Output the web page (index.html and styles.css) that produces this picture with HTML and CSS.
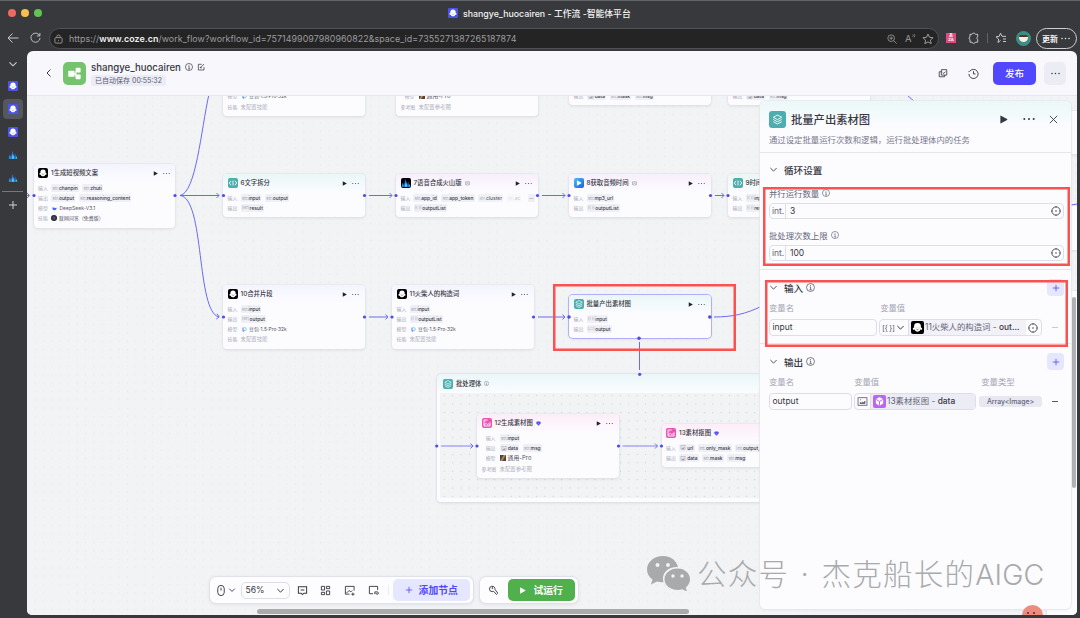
FILE: index.html
```html
<!DOCTYPE html>
<html lang="zh-CN">
<head>
    <meta charset="UTF-8">
    <meta name="viewport" content="width=device-width, initial-scale=1.0">
    <title>shangye_huocairen - 工作流 -智能体平台</title>
    <link rel="stylesheet" href="styles.css">
</head>
<body>
    <!-- Shared icons -->
    <svg class="icon-defs" aria-hidden="true">
        <symbol id="bot" viewBox="0 0 16 16"><path d="M8 2.500a4.200 4.200 0 0 1 4.200 4.300v1.200c1.400.3 1.900 1.300 1.500 2.100-.3.700-1.300.8-2 .5C11 12.300 9.700 13.200 8 13.200S5 12.300 4.300 10.600c-.7.3-1.700.2-2-.5-.4-.8.1-1.800 1.500-2.100V6.800A4.200 4.200 0 0 1 8 2.500z" fill="#fff"/><path d="M6.300 8.200v.8M9.700 8.200v.8M7 10.500q1 .7 2 0" stroke="currentColor" stroke-width=".7" fill="none"/></symbol>
        <symbol id="play" viewBox="0 0 10 10"><path d="M1.500 1.200v7.600q0 .8.8.4L9 5.500q.6-.5 0-1L2.300.8q-.8-.4-.8.4z" fill="currentColor"/></symbol>
        <symbol id="dots" viewBox="0 0 12 4"><g fill="currentColor"><circle cx="1.300" cy="2" r="1"/><circle cx="6" cy="2" r="1"/><circle cx="10.700" cy="2" r="1"/></g></symbol>
        <symbol id="info" viewBox="0 0 12 12"><g fill="none" stroke="currentColor"><circle cx="6" cy="6" r="5.300"/><path d="M5 5.200h1.200V9M4.600 9h3M6 2.800v1.200"/></g></symbol>
        <symbol id="down" viewBox="0 0 10 10"><path d="M1.500 3.300L5 6.800l3.500-3.500" fill="none" stroke="currentColor" stroke-width="1.100"/></symbol>
        <symbol id="layers" viewBox="0 0 16 16"><g fill="none" stroke="#fff" stroke-width="1.100" stroke-linejoin="round"><path d="M8 2.500l5.200 2.800L8 8.100 2.800 5.300zM2.800 8L8 10.800 13.200 8M2.800 10.700L8 13.500l5.200-2.800"/></g></symbol>
        <symbol id="code" viewBox="0 0 16 16"><path d="M5 4.500L2 8l3 3.500M11 4.500L14 8l-3 3.500M8 4v8" fill="none" stroke="#fff" stroke-width="1.400"/></symbol>
        <symbol id="peaks" viewBox="0 0 16 16"><path d="M1 14l2-7 2 7z" fill="#26a4ee"/><path d="M4 14L7.500 1 10 14z" fill="#2b6ff0"/><path d="M6 14l2-8 2 8z" fill="#42e4ee"/><path d="M9 14l2.500-9L13 14z" fill="#2d75ee"/><path d="M12 14l1.500-5 1.500 5z" fill="#31c8ee"/></symbol>
        <symbol id="picture" viewBox="0 0 16 16"><g fill="none" stroke="currentColor" stroke-width="1.200"><rect x="1.500" y="2.500" width="13" height="11"/><path d="M4.500 11V9.500l1.800.8L8 9l1.800.8 1.700-2.300V11z" fill="currentColor"/><path d="M4.500 5.500H6"/></g></symbol>
        <symbol id="photo" viewBox="0 0 16 16"><g fill="none" stroke="#fff" stroke-width="1.400"><path d="M12.800 7v5.800H3.200V3.200H9M3.500 11.500l3-3 2 2 1.500-1.200 2.500 2.200M5.500 6h.6"/></g></symbol>
        <symbol id="target" viewBox="0 0 12 12"><circle cx="6" cy="6" r="5" fill="none" stroke="currentColor"/><circle cx="6" cy="6" r=".9" fill="currentColor"/><path d="M6 .5v1.500M6 10v1.500M.5 6H2M10 6h1.500" stroke="currentColor"/></symbol>
        <symbol id="plus" viewBox="0 0 10 10"><path d="M5 1v8M1 5h8" stroke="currentColor" fill="none"/></symbol>
        <symbol id="doubao" viewBox="0 0 10 10"><path d="M2 1v7.500l3-1.200" fill="none" stroke="#5664f2" stroke-width="1.800"/><path d="M4 1.500c6-1 6 6 1 6" fill="none" stroke="#32c8d2" stroke-width="1.500"/></symbol>
        <symbol id="whale" viewBox="0 0 12 10"><path d="M.5 2c2 2 4 0 6 1.500L8 3c0 1 1 1.200 3.500-.5C11.500 5 10 9 5.500 9 2 9 .5 5.500.5 2z" fill="#4c66f4"/></symbol>
        <symbol id="gem" viewBox="0 0 10 10"><path d="M2 1h6l2 3-5 5.500L0 4z" fill="#5048f2"/><path d="M3.500 4L5 5.300 6.500 4" stroke="#fff" stroke-width=".8" fill="none"/></symbol>
        <symbol id="chat" viewBox="0 0 12 12"><path d="M1.500 2h9v7h-3L6 10.500 4.500 9h-3zM4 5.500h4" fill="none" stroke="currentColor" stroke-width="1.100"/></symbol>
    </svg>

    <div class="title-bar">
        <div class="lights"><i class="red"></i><i class="yellow"></i><i class="green"></i></div>
        <svg class="favicon"><use href="#bot"/></svg>
        <span class="tab-title">shangye_huocairen - 工作流 -智能体平台</span>
    </div>

    <div class="address-row">
        <svg class="back" viewBox="0 0 12 12"><path d="M11.500 6H1M5.500 1.500L1 6l4.500 4.500"/></svg>
        <svg class="reload" viewBox="0 0 12 12"><path d="M10.500 4A5 5 0 1 0 11 6.500M10.800 1v3.300H7.500"/></svg>
        <div class="address">
            <svg class="lock" viewBox="0 0 10 10"><rect x="1" y="3.500" width="8" height="6" rx="1"/><path d="M3.200 3.500V2.300a1.800 1.800 0 0 1 3.600 0v1.200M5 6v1"/></svg>
            <span class="url">https://<b>www.coze.cn</b>/work_flow?workflow_id=7571499097980960822&amp;space_id=7355271387265187874</span>
            <svg class="zoom-icon" viewBox="0 0 12 12"><circle cx="5" cy="5" r="4"/><path d="M8 8l3.500 3.500M3 5h4M5 3v4"/></svg>
            <span class="read">A<svg viewBox="0 0 6 8"><path d="M1 2q1.500 1.500 0 3M3 .8q2.500 2.700 0 5.400"/></svg></span>
            <svg class="star" viewBox="0 0 12 12"><path d="M6 1l1.500 3.300 3.600.4-2.700 2.400.8 3.600L6 8.900l-3.200 1.800.8-3.600L.9 4.700l3.600-.4z"/></svg>
        </div>
        <span class="translate">あ<br>ZA</span>
        <svg class="puzzle" viewBox="0 0 12 12"><path d="M4 2.300a1.800 1.800 0 0 1 3.400 0h2.300v2.600a1.300 1.300 0 0 0 0 2.500v2.800H7.400a1.800 1.800 0 0 1-3.400 0H2V7.400a1.300 1.300 0 0 1 0-2.500V2.300z"/></svg>
        <i class="bar-line"></i>
        <svg class="star-list" viewBox="0 0 12 12"><path d="M5.500 8.500L3 10.500l.6-3.500L1 4.800l3.200-.5L5.500 1.200 7 4.300h4M8 7h3M8 9.500h3"/></svg>
        <div class="avatar"><i></i></div>
        <div class="update">更新 <svg><use href="#dots"/></svg></div>
    </div>

    <div class="main">
        <div class="side-tabs">
            <svg class="side-down"><use href="#down"/></svg>
            <div class="side-tab"><svg class="favicon"><use href="#bot"/></svg></div>
            <div class="side-tab active"><svg class="favicon"><use href="#bot"/></svg></div>
            <div class="side-tab"><svg class="favicon"><use href="#bot"/></svg></div>
            <div class="side-tab"><svg class="side-peaks"><use href="#peaks"/></svg></div>
            <div class="side-tab"><svg class="side-peaks"><use href="#peaks"/></svg></div>
            <i class="side-line"></i>
            <svg class="side-plus"><use href="#plus"/></svg>
        </div>

        <div class="app">
            <div class="app-header">
                <svg class="go-back" viewBox="0 0 8 10"><path d="M5.500 1.500L2 5l3.500 3.500"/></svg>
                <div class="flow-logo">
                    <svg viewBox="0 0 24 24"><g fill="#fff"><rect x="5.500" y="9" width="6.500" height="6.500" rx="1"/><rect x="13.200" y="6" width="5.200" height="5" rx="1"/><rect x="13.200" y="13" width="5.200" height="5" rx="1"/><path d="M11 11.300h2V9h1v7h-1v-2.800h-2z"/></g></svg>
                </div>
                <div class="flow-info">
                    <div class="flow-name">shangye_huocairen
                        <svg><use href="#info"/></svg>
                        <svg viewBox="0 0 12 12"><path d="M7 2H2v8.500h8.500V6M5 7.500L10.500 1.500M5 5.500v2h2" fill="none" stroke="currentColor" stroke-width="1.100"/></svg>
                    </div>
                    <div class="saved">已自动保存 00:55:32</div>
                </div>
                <svg class="copy" viewBox="0 0 12 12"><path d="M4 2h6.500v6.500H4zM4 4.500H1.500v6H8v-2M5.500 5.200L7 6.600 9 4.300"/></svg>
                <svg class="history" viewBox="0 0 12 12"><path d="M2 3.500A5 5 0 1 1 1 6.500M.5 4.500L2 3M6 3.500v3h2.200"/></svg>
                <button class="publish">发布</button>
                <button class="more"><svg><use href="#dots"/></svg></button>
            </div>

            <div class="canvas">
                <div class="node llm n-top1">
                    <div class="node-head"></div>
                    <div class="row"></div><div class="row"></div>
                    <div class="row"><label>模型</label><svg class="mini"><use href="#doubao"/></svg><span class="val">豆包·1.5·Pro·32k</span></div>
                    <div class="row"><label>技能</label><span class="none">未配置技能</span></div>
                </div>
                <div class="node wide n-top2">
                    <div class="node-head"></div>
                    <div class="row"></div><div class="row"></div>
                    <div class="row"><label>模型</label><i class="thumb"></i><span class="val big">通用-Pro</span></div>
                    <div class="row"><label>参考图</label><span class="none">未配置参考图</span></div>
                </div>
                <div class="node n-top3">
                    <div class="node-head"></div>
                    <div class="row"></div>
                    <div class="row"><label>输出</label><span class="tag"><svg><use href="#picture"/></svg>data</span><span class="tag"><i>str.</i>mask</span><span class="tag"><i>str.</i>msg</span></div>
                </div>
                <div class="node n-top4">
                    <div class="node-head"></div>
                    <div class="row"></div>
                    <div class="row"><label>输出</label><span class="tag"><svg><use href="#picture"/></svg>data</span><span class="tag"><i>str.</i>msg</span></div>
                </div>

                <div class="node llm n1">
                    <div class="node-head"><svg class="node-icon black"><use href="#bot"/></svg><b>1生成短视频文案</b><svg class="run"><use href="#play"/></svg><svg class="menu"><use href="#dots"/></svg></div>
                    <div class="row"><label>输入</label><span class="tag"><i>str.</i>chanpin</span><span class="tag"><i>str.</i>zhuti</span></div>
                    <div class="row"><label>输出</label><span class="tag"><i>str.</i>output</span><span class="tag"><i>str.</i>reasoning_content</span></div>
                    <div class="row"><label>模型</label><svg class="mini"><use href="#whale"/></svg><span class="val">DeepSeek-V3.1</span></div>
                    <div class="row"><label>技能</label><i class="skill"></i><span class="val">联网问答（免费版）</span></div>
                </div>
                <div class="node teal n6">
                    <div class="node-head"><svg class="node-icon green"><use href="#code"/></svg><b>6文字拆分</b><svg class="run"><use href="#play"/></svg><svg class="menu"><use href="#dots"/></svg></div>
                    <div class="row"><label>输入</label><span class="tag"><i>str.</i>input</span><span class="tag"><i>str.</i>output</span></div>
                    <div class="row"><label>输出</label><span class="tag"><i class="arr">[str]</i>result</span></div>
                </div>
                <div class="node plugin n7">
                    <div class="node-head"><svg class="node-icon black"><use href="#peaks"/></svg><b>7语音合成火山版</b><svg class="mark"><use href="#chat"/></svg><svg class="run"><use href="#play"/></svg><svg class="menu"><use href="#dots"/></svg></div>
                    <div class="row"><label>输入</label><span class="tag"><i>str.</i>app_id</span><span class="tag"><i>str.</i>app_token</span><span class="tag half"><i>str.</i>cluster</span><span class="tag faded"><i>str.</i>ac</span><span class="tag rest">···</span></div>
                    <div class="row"><label>输出</label><span class="tag"><i class="arr">[{ }]</i>outputList</span></div>
                </div>
                <div class="node plugin n8">
                    <div class="node-head"><svg class="node-icon blue"><use href="#play"/></svg><b>8获取音频时间</b><svg class="mark"><use href="#chat"/></svg><svg class="run"><use href="#play"/></svg><svg class="menu"><use href="#dots"/></svg></div>
                    <div class="row"><label>输入</label><span class="tag"><i>str.</i>mp3_url</span></div>
                    <div class="row"><label>输出</label><span class="tag"><i class="arr">[{ }]</i>outputList</span></div>
                </div>
                <div class="node teal n9">
                    <div class="node-head"><svg class="node-icon green"><use href="#code"/></svg><b>9时间线</b></div>
                    <div class="row"><label>输入</label><span class="tag"><i class="arr">[{ }]</i>input</span></div>
                    <div class="row"><label>输出</label><span class="tag"><i class="arr">[{ }]</i>result</span></div>
                </div>
                <div class="node llm n10">
                    <div class="node-head"><svg class="node-icon black"><use href="#bot"/></svg><b>10合并片段</b><svg class="run"><use href="#play"/></svg><svg class="menu"><use href="#dots"/></svg></div>
                    <div class="row"><label>输入</label><span class="tag"><i>str.</i>input</span></div>
                    <div class="row"><label>输出</label><span class="tag"><i class="arr">[str]</i>output</span></div>
                    <div class="row"><label>模型</label><svg class="mini"><use href="#doubao"/></svg><span class="val">豆包·1.5·Pro·32k</span></div>
                    <div class="row"><label>技能</label><span class="none">未配置技能</span></div>
                </div>
                <div class="node llm n11">
                    <div class="node-head"><svg class="node-icon black"><use href="#bot"/></svg><b>11火柴人的构造词</b><svg class="run"><use href="#play"/></svg><svg class="menu"><use href="#dots"/></svg></div>
                    <div class="row"><label>输入</label><span class="tag"><i>str.</i>input</span></div>
                    <div class="row"><label>输出</label><span class="tag"><i class="arr">[{ }]</i>outputList</span></div>
                    <div class="row"><label>模型</label><svg class="mini"><use href="#doubao"/></svg><span class="val">豆包·1.5·Pro·32k</span></div>
                    <div class="row"><label>技能</label><span class="none">未配置技能</span></div>
                </div>
                <div class="node teal selected n-batch">
                    <div class="node-head"><svg class="node-icon green"><use href="#layers"/></svg><b>批量产出素材图</b><svg class="run"><use href="#play"/></svg><svg class="menu"><use href="#dots"/></svg></div>
                    <div class="row"><label>输入</label><span class="tag"><i class="arr">[{ }]</i>input</span></div>
                    <div class="row"><label>输出</label><span class="tag"><i class="arr">[▱]</i>output</span></div>
                </div>

                <div class="batch-body">
                    <div class="batch-head"><svg class="node-icon green"><use href="#layers"/></svg><b>批处理体</b><svg class="mark"><use href="#info"/></svg></div>
                    <div class="batch-area"></div>
                </div>
                <div class="node pink wide n12">
                    <div class="node-head"><svg class="node-icon magenta"><use href="#photo"/></svg><b>12生成素材图</b><svg class="mark"><use href="#gem"/></svg><svg class="run"><use href="#play"/></svg><svg class="menu"><use href="#dots"/></svg></div>
                    <div class="row"><label>输入</label><span class="tag"><i>str.</i>input</span></div>
                    <div class="row"><label>输出</label><span class="tag"><svg><use href="#picture"/></svg>data</span><span class="tag"><i>str.</i>msg</span></div>
                    <div class="row"><label>模型</label><i class="thumb"></i><span class="val big">通用-Pro</span></div>
                    <div class="row"><label>参考图</label><span class="none">未配置参考图</span></div>
                </div>
                <div class="node pink n13">
                    <div class="node-head"><svg class="node-icon magenta"><use href="#photo"/></svg><b>13素材抠图</b><svg class="mark"><use href="#gem"/></svg></div>
                    <div class="row"><label>输入</label><span class="tag"><svg><use href="#picture"/></svg>url</span><span class="tag"><i>int.</i>only_mask</span><span class="tag"><i>int.</i>output_mode</span></div>
                    <div class="row"><label>输出</label><span class="tag"><svg><use href="#picture"/></svg>data</span><span class="tag"><i>str.</i>mask</span><span class="tag"><i>str.</i>msg</span></div>
                </div>
                <div class="node teal n-far1"></div>
                <div class="node llm n-far2"></div>
                <div class="node teal n-far3"></div>

                <!-- Connections between nodes -->
                <svg class="edges" viewBox="27 96 1050 519">
                    <g class="lines">
                        <path d="M27 195.500h2M180 195.500h39M369 195.500h23M542 195.500h23M715 195.500h9"/>
                        <path d="M180 195.500C196 193 201 130 209 94M180 195.500C205 198 196 312 219 317"/>
                        <path d="M369 317h19M538 317h27M714 317C732 317 746 314 762 306"/>
                        <path d="M639.500 342v28M907 95l8 7M1071 205l6-1"/>
                        <path class="soft" d="M441 446h32M622.500 446h35"/>
                        <path d="M27 193l2.500 2.500L27 198M216.500 193l2.500 2.500-2.500 2.500M389.500 193l2.500 2.500-2.500 2.500M562.500 193l2.500 2.500-2.500 2.500M721.500 193l2.500 2.500-2.500 2.500M217 313.800l2.200 3.200-3 2M385.500 314.500l2.500 2.500-2.500 2.500M562.500 314.500l2.500 2.500-2.500 2.500M470.500 443.500l2.500 2.500-2.500 2.500M655 443.500l2.500 2.500-2.500 2.500"/>
                    </g>
                    <g class="ports">
                        <circle cx="34" cy="195.500" r="1.600"/><circle cx="175" cy="195.500" r="1.600"/><circle cx="223.500" cy="195.500" r="1.600"/><circle cx="364.500" cy="195.500" r="1.600"/><circle cx="396" cy="195.500" r="1.600"/><circle cx="537.500" cy="195.500" r="1.600"/><circle cx="569" cy="195.500" r="1.600"/><circle cx="710.500" cy="195.500" r="1.600"/><circle cx="728" cy="195.500" r="1.600"/>
                        <circle cx="223.500" cy="317" r="1.600"/><circle cx="364.500" cy="317" r="1.600"/><circle cx="392" cy="317" r="1.600"/><circle cx="533.500" cy="317" r="1.600"/><circle cx="569" cy="317" r="1.800"/><circle cx="709.800" cy="317" r="1.800"/><circle cx="639" cy="338.300" r="1.800"/><circle cx="639.700" cy="374.300" r="1.600"/>
                        <circle cx="436.700" cy="446" r="1.600"/><circle cx="477" cy="446" r="1.600"/><circle cx="618.500" cy="446" r="1.600"/><circle cx="661.500" cy="446" r="1.600"/>
                    </g>
                </svg>

                <div class="tools">
                    <div class="tool-group">
                        <svg class="mouse" viewBox="0 0 12 14"><path d="M2.500 5a3.500 3.500 0 0 1 7 0v4a3.500 3.500 0 0 1-7 0zM6 4v3"/></svg>
                        <svg class="caret"><use href="#down"/></svg>
                        <div class="percent">56%<svg><use href="#down"/></svg></div>
                        <svg class="tool"><use href="#chat"/></svg>
                        <svg class="tool" viewBox="0 0 12 12"><path d="M1.500 1.500H5v4H1.500zM7 1.500h3.500V4H7zM1.500 8H5v2.500H1.500zM7 6.500h3.500v4H7z"/></svg>
                        <svg class="tool" viewBox="0 0 12 12"><path d="M11 6V1.500H1.500V10H6M2.500 9l3-3 2 1.500L9 6M4 4h.5M8 10h3.500M9.700 8.300v3.400"/></svg>
                        <svg class="tool" viewBox="0 0 12 12"><path d="M10.500 5.500v-4h-9v8H5.500M7.500 10V7.500H10a1.300 1.300 0 1 1-1.300 1.300"/></svg>
                        <i class="tool-line"></i>
                        <button class="add-node"><svg><use href="#plus"/></svg>添加节点</button>
                    </div>
                    <div class="tool-group">
                        <svg class="wrench" viewBox="0 0 12 12"><path d="M4.500 7.300a3 3 0 1 1 3-3.800L7.700 5l3 3.800-1.600 1.500-3-3.500zM4.700 2v2.500"/></svg>
                        <button class="test-run"><svg><use href="#play"/></svg>试运行</button>
                    </div>
                </div>
                <i class="scroll-x"></i>
                <i class="scroll-y"></i>

                <div class="panel">
                    <div class="panel-head">
                        <div class="panel-title">
                            <svg class="panel-icon"><use href="#layers"/></svg>
                            <h2>批量产出素材图</h2>
                            <svg class="p-run"><use href="#play"/></svg>
                            <svg class="p-dots"><use href="#dots"/></svg>
                            <svg class="p-close" viewBox="0 0 10 10"><path d="M1 1l8 8M9 1L1 9"/></svg>
                        </div>
                        <p>通过设定批量运行次数和逻辑，运行批处理体内的任务</p>
                    </div>
                    <div class="section loop">
                        <div class="section-title"><svg><use href="#down"/></svg><h3>循环设置</h3></div>
                        <div class="field-label">并行运行数量<svg><use href="#info"/></svg></div>
                        <div class="number"><span>int.</span><em>3</em><svg><use href="#target"/></svg></div>
                        <div class="field-label second">批处理次数上限<svg><use href="#info"/></svg></div>
                        <div class="number"><span>int.</span><em>100</em><svg><use href="#target"/></svg></div>
                    </div>
                    <div class="section inputs">
                        <div class="section-title"><svg><use href="#down"/></svg><h3>输入</h3><svg class="tip"><use href="#info"/></svg><button class="plus"><svg><use href="#plus"/></svg></button></div>
                        <div class="cols"><span>变量名</span><span>变量值</span></div>
                        <div class="line">
                            <div class="box">input</div>
                            <div class="ref">
                                <span class="kind">[{ }]</span><svg class="ref-down"><use href="#down"/></svg>
                                <div class="pill"><svg class="pill-icon black"><use href="#bot"/></svg>11火柴人的构造词 - <b>out...</b></div>
                                <svg class="ref-target"><use href="#target"/></svg>
                            </div>
                            <i class="minus off"></i>
                        </div>
                    </div>
                    <div class="section outputs">
                        <div class="section-title"><svg><use href="#down"/></svg><h3>输出</h3><svg class="tip"><use href="#info"/></svg><button class="plus"><svg><use href="#plus"/></svg></button></div>
                        <div class="cols"><span>变量名</span><span>变量值</span><span>变量类型</span></div>
                        <div class="line">
                            <div class="box">output</div>
                            <div class="ref">
                                <svg class="kind-pic"><use href="#picture"/></svg>
                                <div class="pill"><svg class="pill-icon purple" viewBox="0 0 16 16"><path d="M8 2.500l4.500 2.700v5.400L8 13.300l-4.500-2.700V5.200z" fill="#fff"/><path d="M4 5.500L8 8l4-2.500M8 8v5" fill="none" stroke="#bb65f5" stroke-width="1.200"/></svg>13素材抠图 - <b>data</b></div>
                            </div>
                            <span class="type">Array&lt;Image&gt;</span>
                            <i class="minus"></i>
                        </div>
                    </div>
                </div>

                <i class="frame frame-node"></i>
                <i class="frame frame-loop"></i>
                <i class="frame frame-input"></i>

                <div class="watermark">
                    <svg viewBox="0 0 44 36"><path d="M17 1C8 1 1 7 1 14.500c0 4 2 7.500 5.500 10L5 29.500l6-3c2 .6 4 .9 6.500.8C15 19 21 11.500 32 12 30.500 5.500 24.500 1 17 1z"/><path d="M31.500 13.500c-7.500 0-13 5-13 10.800s5.500 10.700 13 10.700c1.700 0 3.300-.3 4.800-.8l4.700 2.300-1.200-4C42 30.600 44 28 44 24.300c0-5.800-5-10.800-12.500-10.800z"/><g class="eyes"><circle cx="11.500" cy="10" r="2"/><circle cx="22" cy="10" r="2"/><circle cx="27" cy="21" r="1.700"/><circle cx="36" cy="21" r="1.700"/></g></svg>
                    <span>公众号 · 杰克船长的<b>AIGC</b></span>
                </div>
                <div class="mascot"><i></i><i></i></div>
            </div>
        </div>
    </div>
</body>
</html>
```

FILE: styles.css
```css
* {
    box-sizing: border-box;
}

body {
    font-family: Inter, "Noto Sans CJK SC", sans-serif;
    margin: 0;
    width: 1080px;
    height: 618px;
    overflow: hidden;
    background-color: #38393c;
    border-top: 1px solid #626467;
    color: #383743;
}

svg {
    display: block;
    flex: none;
}

i, em {
    font-style: normal;
}

h2, h3, p {
    margin: 0;
}

button {
    font-family: inherit;
    border: none;
    padding: 0;
    display: flex;
    align-items: center;
    justify-content: center;
}

.icon-defs {
    position: absolute;
    width: 0;
    height: 0;
}

/* Browser window */
.title-bar {
    height: 27px;
    display: flex;
    align-items: center;
    padding: 0 0 3px 8px;
}

.lights {
    display: flex;
    gap: 4.8px;
    width: 440px;
}

.lights i {
    width: 8px;
    height: 8px;
    border-radius: 50%;
}

.lights .red { background: #ed6a5e; }
.lights .yellow { background: #f5bf4f; }
.lights .green { background: #61c554; }

.favicon {
    width: 10px;
    height: 10px;
    background: #4d53e8;
    color: #4d53e8;
    border-radius: 1px;
}

.tab-title {
    color: #f2f2f2;
    font-size: 8.8px;
    font-weight: 500;
    margin-left: 5px;
    white-space: nowrap;
}

.address-row {
    height: 23px;
    display: flex;
    align-items: flex-start;
    color: #c8c8ca;
}

.address-row > * {
    margin-top: 4px;
}

.address-row svg {
    fill: none;
    stroke: currentColor;
}

.back {
    width: 12px;
    height: 12px;
    margin-left: 7px;
}

.reload {
    width: 11px;
    height: 11px;
    margin-left: 11px;
}

.address-row .address {
    width: 890px;
    height: 21px;
    margin: 0 0 0 8px;
    padding: 0 4px 0 4px;
    background: #242425;
    border: 1px solid #505154;
    border-radius: 11px;
    display: flex;
    align-items: center;
    color: #9b9b9d;
}

.lock {
    width: 9px;
    height: 10px;
}

.url {
    width: 827px;
    padding-left: 6px;
    font-size: 8.9px;
    letter-spacing: .055px;
    white-space: nowrap;
}

.url b {
    color: #f0f0f0;
    font-weight: 600;
}

.zoom-icon {
    width: 10px;
    height: 10px;
}

.read {
    display: flex;
    width: 12px;
    margin-left: 8px;
    font-size: 9.5px;
    line-height: 12px;
}

.read svg {
    width: 4px;
    height: 6px;
}

.star {
    width: 12px;
    height: 12px;
    margin-left: 5px;
}

.address-row .translate {
    width: 10px;
    height: 10px;
    margin: 5px 0 0 7px;
    padding-top: 1px;
    background: #e2497f;
    color: #fff;
    font-size: 4px;
    line-height: 4px;
    text-align: center;
    font-weight: 700;
}

.puzzle {
    width: 12px;
    height: 12px;
    margin-left: 12px;
}

.address-row .bar-line {
    width: 1px;
    height: 10px;
    background: #606164;
    margin: 5px 0 0 7px;
}

.star-list {
    width: 12px;
    height: 12px;
    margin-left: 7px;
}

.address-row .avatar {
    width: 15px;
    height: 15px;
    margin: 3px 0 0 9px;
    border-radius: 50%;
    background: #3c8e83;
    padding: 4px 3px;
}

.avatar i {
    display: block;
    width: 9px;
    height: 7px;
    background: #f5efe8;
    border-top: 2px solid #55352b;
    border-radius: 2px 2px 5px 5px;
}

.address-row .update {
    height: 21px;
    width: 41px;
    margin: 0 0 0 5px;
    border: 1px solid #d0d0d2;
    border-radius: 11px;
    font-size: 8px;
    font-weight: 700;
    color: #f3f3f3;
    display: flex;
    align-items: center;
    gap: 3px;
    padding-left: 5px;
}

.update svg {
    width: 9px;
    height: 3px;
    stroke: none;
}

.main {
    display: flex;
    height: 564px;
}

.side-tabs {
    width: 27px;
    padding-right: 2px;
    display: flex;
    flex-direction: column;
    align-items: center;
    color: #d2d2d4;
}

.side-down {
    width: 10px;
    height: 10px;
    margin: 8px 0 5px;
}

.side-tab {
    width: 20px;
    height: 20px;
    margin: 2px 0 1px;
    border-radius: 4px;
    display: flex;
    align-items: center;
    justify-content: center;
}

.side-tab.active {
    background: #56575e;
}

.side-peaks {
    width: 10px;
    height: 10px;
}

.side-line {
    width: 21px;
    height: 1px;
    margin-top: 2px;
    background: #77787b;
}

.side-plus {
    width: 10px;
    height: 10px;
    margin-top: 8px;
}

/* Workflow page */
.app {
    width: 1050px;
    height: 564px;
    border-radius: 6px 6px 5px 5px;
    overflow: hidden;
    background: #f7f7fc;
}

.app-header {
    height: 45px;
    border-bottom: 1px solid #e6e7ee;
    display: flex;
    align-items: center;
    padding-left: 18px;
}

.app-header svg {
    stroke: currentColor;
    fill: none;
}

.go-back {
    width: 8px;
    height: 10px;
}

.flow-logo {
    width: 23px;
    height: 23px;
    margin-left: 10px;
    border-radius: 5px;
    background: #75c36c;
}

.app-header .flow-logo svg {
    stroke: none;
}

.flow-info {
    width: 820px;
    margin-left: 5px;
}

.flow-name {
    display: flex;
    align-items: center;
    gap: 4px;
    height: 13px;
    font-size: 9.65px;
    font-weight: 500;
}

.flow-name svg {
    width: 8px;
    height: 8px;
}

.saved {
    width: fit-content;
    height: 11px;
    margin-top: 1px;
    padding: 0 4px;
    font-size: 7px;
    line-height: 11px;
    background: #ebecf5;
    border-radius: 3px;
    color: #5d5d70;
}

.copy {
    width: 10px;
    height: 10px;
    margin-left: 27px;
}

.history {
    width: 11px;
    height: 11px;
    margin-left: 20px;
}

.publish {
    width: 43px;
    height: 23px;
    margin-left: 14px;
    border-radius: 5px;
    background: #5147ff;
    color: #fff;
    font-size: 9.5px;
    font-weight: 500;
}

.more {
    width: 22px;
    height: 23px;
    margin-left: 8px;
    border-radius: 5px;
    background: #ececf5;
    color: #383743;
}

.app-header .more svg {
    width: 9px;
    height: 3px;
    stroke: none;
}

.canvas {
    position: relative;
    height: 519px;
    overflow: hidden;
    background: #f2f3f5 radial-gradient(circle, #e7e8ec .6px, transparent 1px) 4px 6px / 8.4px 8.4px;
}

/* Nodes */
.node {
    position: absolute;
    width: 141.5px;
    padding-bottom: 4px;
    background: #fcfcff;
    border-radius: 4px;
    box-shadow: 0 0 0 .6px #e4e4ed, 0 1px 3px rgba(40, 40, 70, .12);
}

.node-head {
    height: 19px;
    padding: 0 5.5px 0 4.5px;
    border-radius: 4px 4px 0 0;
    display: flex;
    align-items: center;
    background: linear-gradient(var(--tint, #f4f4ff), #fcfcff);
}

.teal { --tint: #e9f7f7; }
.plugin { --tint: #f8effc; }
.pink { --tint: #fdedf8; }

.node-icon {
    width: 10px;
    height: 10px;
    border-radius: 2px;
    margin-right: 3px;
}

.black { background: #000; color: #000; }
.green { background: #4eadae; }
.blue { background: linear-gradient(135deg, #41c4f5, #2159dd); color: #fff; padding: 2px; }
.magenta { background: #ea55b5; }
.purple { background: #bb65f5; }

.node-head b, .batch-head b {
    font-size: 6.35px;
    font-weight: 500;
    line-height: 10px;
    white-space: nowrap;
}

.run {
    width: 5px;
    height: 5px;
    margin-left: auto;
    color: #22222c;
}

.menu {
    width: 7px;
    height: 3px;
    margin-left: 5px;
    color: #4a4a58;
}

.mark {
    width: 5px;
    height: 5px;
    margin-left: 3px;
    color: #69697a;
}

.row {
    height: 10.25px;
    padding-left: 4.5px;
    display: flex;
    align-items: center;
    font-size: 4.9px;
    line-height: 8px;
    white-space: nowrap;
}

.row label {
    width: 10px;
    margin-right: 3px;
    color: #a9aab9;
    font-size: 4.9px;
}

.wide .row label {
    width: 14px;
    text-align: right;
    margin-right: 4px;
}

.tag {
    display: flex;
    align-items: center;
    height: 8px;
    padding: 0 1.2px;
    margin-right: 3.5px;
    border-radius: 1.5px;
    background: #eff0f6;
    color: #383743;
    font-weight: 500;
}

.tag i {
    color: #a6a7b8;
    font-weight: 400;
    letter-spacing: -.1px;
}

.tag .arr {
    font-size: 4.4px;
    letter-spacing: -.3px;
    margin-right: .8px;
}

.tag svg {
    width: 6px;
    height: 5px;
    margin-right: 1px;
    color: #85869a;
}

.tag.half {
    opacity: .8;
}

.tag.faded {
    opacity: .25;
}

.tag.rest {
    margin-left: 3px;
}

.mini {
    width: 5px;
    height: 5px;
    margin: 0 2.5px 0 1px;
}

.val {
    color: #525263;
    letter-spacing: .08px;
}

.val.big {
    font-size: 5.8px;
}

.none {
    color: #b1b2bd;
    font-size: 5.4px;
}

.skill {
    width: 6px;
    height: 6px;
    border-radius: 50%;
    margin-right: 2px;
    background: radial-gradient(#7b5870, #15203a 65%);
}

.thumb {
    width: 6px;
    height: 6px;
    margin-right: 2px;
    background: linear-gradient(120deg, #434741 30%, #c59562 50%, #554039 70%);
}

.selected {
    box-shadow: 0 0 0 1px #b2aef8, 0 1px 3px rgba(40, 40, 70, .12);
}

.n-top1 { left: 196px; top: -44.2px; }
.n-top2 { left: 369px; top: -44.2px; }
.n-top3 { left: 542px; top: -34.2px; }
.n-top4 { left: 701px; top: -34.2px; }
.n1 { left: 6.5px; top: 67.5px; }
.n6 { left: 196px; top: 77.5px; }
.n7 { left: 369px; top: 77.5px; }
.n8 { left: 542px; top: 77.5px; }
.n9 { left: 701px; top: 77.5px; }
.n10 { left: 196px; top: 188.5px; }
.n11 { left: 365px; top: 188.5px; }
.n-batch { left: 542px; top: 198.7px; }
.n12 { left: 450px; top: 317.7px; }
.n13 { left: 634.5px; top: 327.7px; }
.n-far1 { left: 1020px; top: 15px; height: 43px; }
.n-far2 { left: 1020px; top: 110px; height: 44px; }
.n-far3 { left: 1020px; top: 195px; height: 340px; }

.batch-body {
    position: absolute;
    left: 410px;
    top: 278px;
    width: 400px;
    height: 127.5px;
    padding: 0 3px 3px;
    border-radius: 4px;
    background: linear-gradient(#e9f7f8, #fbfcff 19px);
    box-shadow: 0 0 0 .7px #e0e2e9, 0 1px 3px rgba(40, 40, 70, .12);
}

.batch-head {
    height: 19px;
    padding-left: 3px;
    display: flex;
    align-items: center;
}

.batch-area {
    height: 105px;
    background: #f2f3f5 radial-gradient(circle, #d5d6dc .6px, transparent 1px) 0 -1.5px / 8.4px 8.4px;
}

.edges {
    position: absolute;
    left: 0;
    top: 0;
    width: 1050px;
    height: 519px;
}

.lines {
    fill: none;
    stroke: #6b6af0;
    stroke-width: 1;
}

.lines .soft {
    stroke: #aaa8f8;
    stroke-width: 1.5;
}

.ports {
    fill: #4e4be8;
}

/* Bottom toolbar */
.tools {
    position: absolute;
    left: 182.5px;
    top: 481px;
    display: flex;
    gap: 7px;
}

.tool-group {
    height: 26px;
    padding: 0 3px 0 5px;
    display: flex;
    align-items: center;
    background: #fdfdff;
    border-radius: 6px;
    box-shadow: 0 0 0 1px #e1e1ec, 0 1px 4px rgba(40, 40, 70, .12);
}

.tool-group > svg {
    fill: none;
    stroke: currentColor;
}

.mouse {
    width: 12px;
    height: 13px;
}

.caret {
    width: 8px;
    height: 8px;
    margin-left: 1px;
}

.percent {
    width: 49px;
    height: 17px;
    margin: 0 7px 0 5px;
    padding: 0 4px;
    display: flex;
    align-items: center;
    justify-content: space-between;
    border: 1px solid #dcdde8;
    border-radius: 5px;
    font-size: 8.6px;
}

.percent svg {
    width: 9px;
    height: 9px;
}

.tool {
    width: 11px;
    height: 11px;
    margin-right: 12.8px;
}

.tool-line {
    width: 1px;
    height: 10px;
    margin: 0 4px 0 -4px;
    background: #ebebf2;
}

.add-node {
    width: 77px;
    height: 22px;
    gap: 6px;
    border-radius: 5px;
    background: #e5e6ff;
    color: #5147ff;
    font-size: 9.8px;
    font-weight: 600;
}

.add-node svg {
    width: 8px;
    height: 8px;
}

.wrench {
    width: 11px;
    height: 11px;
    margin: 0 9px 0 3px;
}

.test-run {
    width: 67px;
    height: 22px;
    gap: 7px;
    border-radius: 5px;
    background: #4fb04c;
    color: #fff;
    font-size: 9.8px;
    font-weight: 600;
}

.test-run svg {
    width: 7px;
    height: 7px;
}

.scroll-x {
    position: absolute;
    left: 230px;
    top: 513px;
    width: 432px;
    height: 5px;
    border-radius: 3px;
    background: #a9aaac;
}

.scroll-y {
    position: absolute;
    left: 1045px;
    top: 201px;
    width: 4px;
    height: 191px;
    border-radius: 2px;
    background: #b0b1b4;
}

/* Settings panel */
.panel {
    position: absolute;
    left: 733px;
    top: 5px;
    width: 311px;
    height: 508px;
    border-radius: 5px;
    background: #fcfcff;
    box-shadow: 0 0 0 .7px #e6e7ee, 0 1px 3px rgba(40, 40, 70, .08);
}

.panel-head {
    height: 52px;
    padding: 9px 9px 0;
    border-radius: 5px 5px 0 0;
    background: linear-gradient(#eaf8f8, #fcfcff 26px);
    border-bottom: 1px solid #e6e6ee;
}

.panel-title {
    display: flex;
    align-items: center;
    height: 18px;
}

.panel-icon {
    width: 17px;
    height: 17px;
    padding: 2px;
    border-radius: 3px;
    background: #4eadae;
}

.panel-title h2 {
    width: 208px;
    margin-left: 5px;
    font-size: 11.3px;
    font-weight: 500;
}

.p-run {
    width: 9px;
    height: 9px;
}

.p-dots {
    width: 12px;
    height: 4px;
    margin-left: 15px;
}

.p-close {
    width: 9px;
    height: 9px;
    margin-left: 14px;
    stroke: currentColor;
}

.panel-head p {
    margin-top: 4px;
    font-size: 8.4px;
    line-height: 16px;
    color: #77778b;
}

.section {
    padding: 0 7px 0 9px;
    border-bottom: 1px solid #e6e6ee;
}

.loop { height: 117px; }
.inputs { height: 74px; }

.section-title {
    display: flex;
    align-items: center;
    height: 17px;
}

.loop .section-title {
    height: 33px;
}

.inputs, .outputs {
    padding-top: 9px;
}

.section-title svg {
    width: 9px;
    height: 9px;
    color: #505061;
}

.section-title h3 {
    margin: 0 3px 0 6px;
    font-size: 9.6px;
    font-weight: 500;
}

.plus {
    width: 17px;
    height: 17px;
    margin-left: auto;
    border-radius: 4px;
    background: #e5e6ff;
}

.section-title .plus svg {
    width: 8px;
    height: 8px;
    color: #5147ff;
}

.field-label {
    height: 12px;
    margin: 1px 0 4px;
    display: flex;
    align-items: center;
    gap: 3px;
    font-size: 8.4px;
    color: #65657a;
}

.field-label.second {
    margin: 10px 0 4px;
}

.field-label svg {
    width: 8px;
    height: 8px;
}

.number {
    height: 16px;
    display: flex;
    align-items: center;
    border: 1px solid #dddeea;
    border-radius: 4px;
    font-size: 8.5px;
    padding-right: 2px;
}

.number span {
    width: 16px;
    padding-left: 2px;
    border-right: 1px solid #dddeea;
    line-height: 14px;
    color: #65657a;
}

.number em {
    margin: 0 auto 0 4px;
}

.number svg, .ref-target {
    width: 10px;
    height: 10px;
}

.cols {
    display: flex;
    margin-top: 6px;
    height: 12px;
    font-size: 8.4px;
    line-height: 12px;
    color: #a4a4b2;
}

.inputs .cols { gap: 86px; }
.outputs .cols { gap: 60px; }
.outputs .cols span:nth-child(3) { margin-left: 42px; }

.line {
    margin-top: 5px;
    display: flex;
    align-items: center;
    height: 17px;
    font-size: 8.5px;
}

.box {
    width: 108px;
    height: 17px;
    padding-left: 2.5px;
    border: 1px solid #dddeea;
    border-radius: 4px;
    line-height: 15px;
}

.ref {
    width: 163px;
    height: 17px;
    margin-left: 2px;
    display: flex;
    align-items: center;
    border: 1px solid #dddeea;
    border-radius: 4px;
    overflow: hidden;
}

.kind {
    width: 16px;
    padding-left: 2px;
    font-size: 8px;
    letter-spacing: -.5px;
    white-space: nowrap;
    color: #5c5c6d;
}

.ref-down {
    width: 9px;
    height: 9px;
    margin-right: 3px;
}

.pill {
    display: flex;
    align-items: center;
    width: 118px;
    height: 15px;
    padding-left: 2px;
    border-left: 1px solid #dddeea;
    background: #f1f1f7;
    font-size: 8.4px;
    line-height: 13px;
    color: #65657a;
    white-space: pre;
}

.pill b {
    color: #383743;
    font-weight: 500;
}

.pill-icon {
    width: 13px;
    height: 13px;
    margin-right: 1px;
    border-radius: 2px;
}

.ref-target {
    margin-left: 2px;
}

.minus {
    width: 6px;
    height: 1px;
    margin: 0 6px 0 auto;
    background: #565666;
}

.minus.off {
    background: #c9c9d2;
}

.outputs {
    border: none;
}

.outputs .box { width: 83px; }
.outputs .ref { width: 122px; }
.outputs .pill { width: 105px; background: #ebecf4; }

.kind-pic {
    width: 11px;
    height: 11px;
    margin: 0 2px 0 2px;
    color: #5c5c6d;
}

.type {
    width: 63px;
    height: 11px;
    margin-left: 3px;
    border-radius: 3px;
    background: #e7e8f1;
    color: #65657a;
    font-size: 6.9px;
    font-weight: 500;
    line-height: 11px;
    text-align: center;
}

/* Highlight frames */
.frame {
    position: absolute;
    box-shadow: inset 0 0 0 2.5px #fb5151;
}

.frame-node { left: 526px; top: 188px; width: 183px; height: 67px; }
.frame-loop { left: 736px; top: 91px; width: 307px; height: 79px; }
.frame-input { left: 738px; top: 184px; width: 303px; height: 67px; }

.watermark {
    position: absolute;
    left: 619px;
    top: 458px;
    display: flex;
    align-items: center;
    gap: 7px;
    height: 38px;
    color: #a9aaac;
    font-size: 29.5px;
    font-weight: 300;
    letter-spacing: 1.2px;
    line-height: 36px;
    white-space: nowrap;
}

.watermark span {
    margin-top: 2px;
    word-spacing: 2px;
}

.watermark b {
    font-size: 28.5px;
    font-weight: 300;
    letter-spacing: .2px;
}

.watermark svg {
    width: 44px;
    height: 36px;
    fill: #a9aaac;
}

.watermark .eyes {
    fill: #f2f3f5;
}

.mascot {
    position: absolute;
    left: 995px;
    top: 509px;
    width: 21px;
    height: 20px;
    padding: 7px 5px;
    border-radius: 50%;
    background: #ed8c7c;
    display: flex;
    gap: 4px;
}

.mascot i {
    width: 2px;
    height: 2px;
    border-radius: 50%;
    background: #4c3038;
}
```
